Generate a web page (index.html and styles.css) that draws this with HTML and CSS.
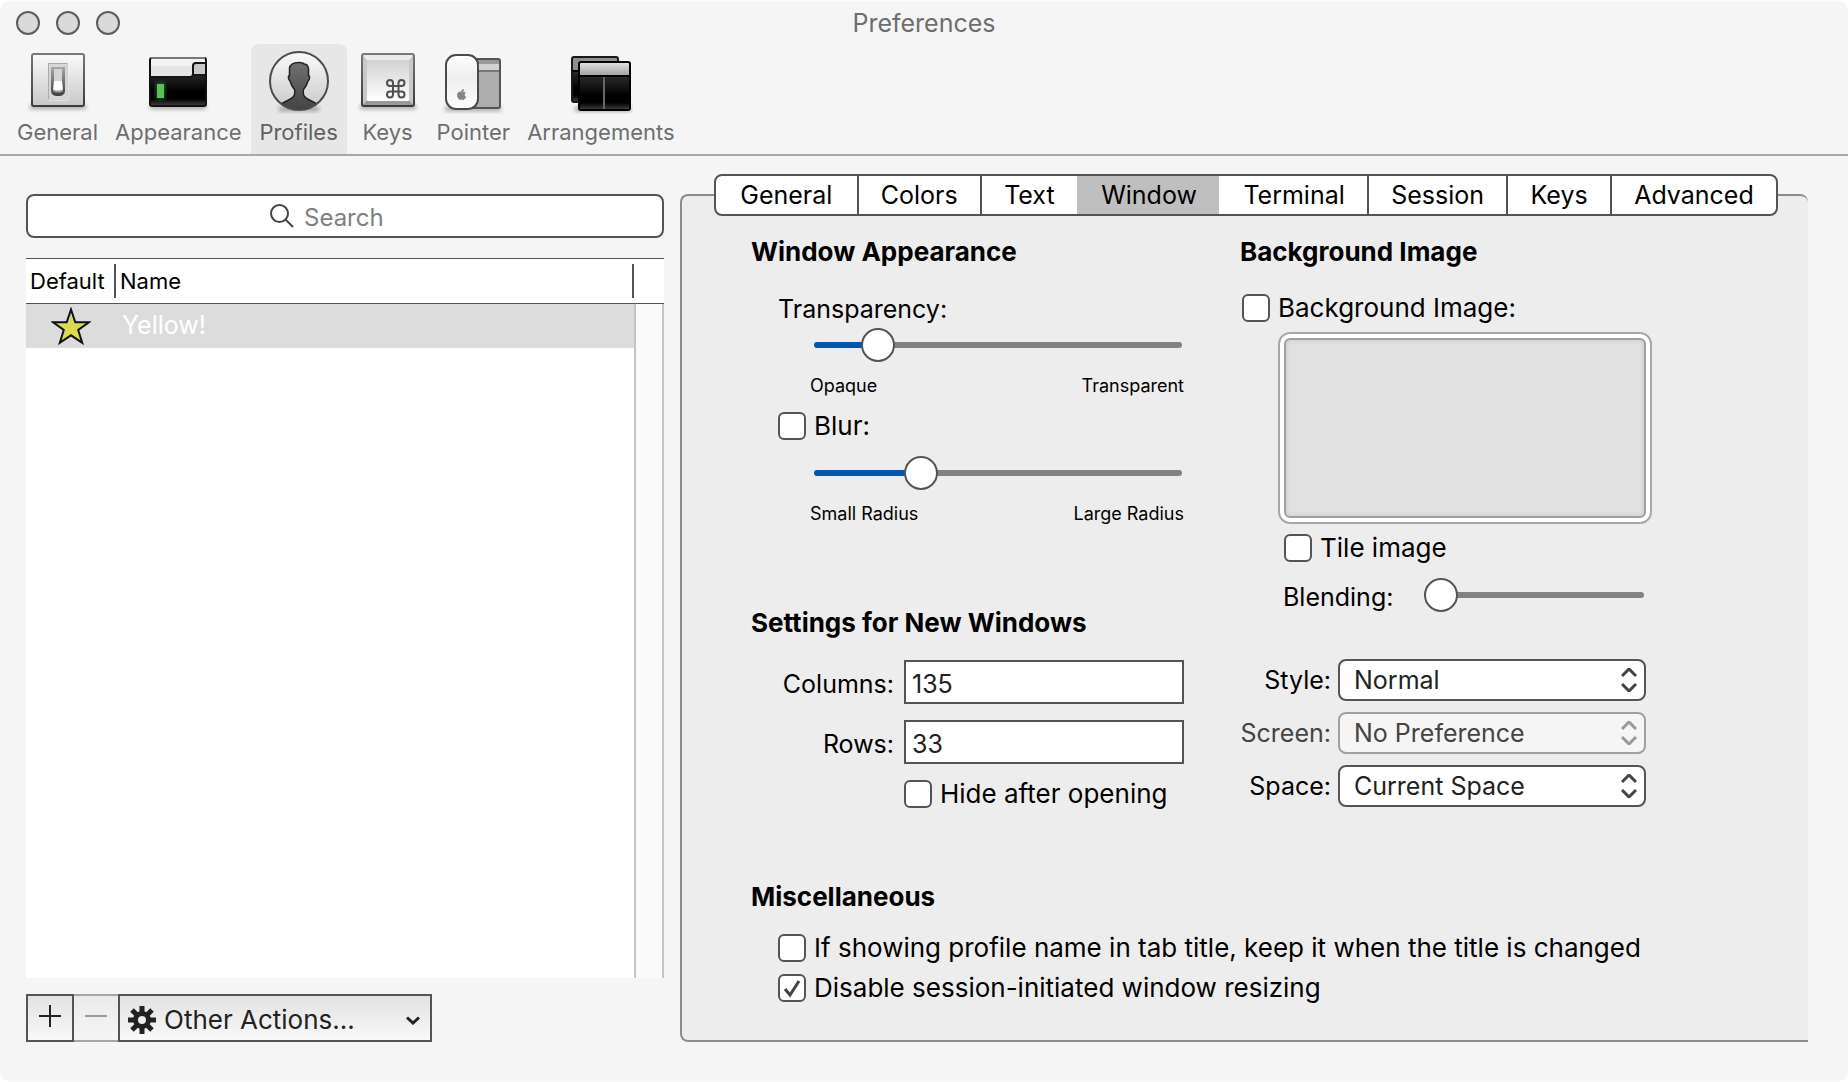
FILE: index.html
```html
<!DOCTYPE html>
<html lang="en">
<head>
<meta charset="utf-8">
<title>Preferences</title>
<link rel="stylesheet" href="styles.css">
</head>
<body>
<div class="window">
  <header class="titlebar">
    <div class="lights">
      <button class="light" aria-label="Close"></button>
      <button class="light" aria-label="Minimize"></button>
      <button class="light" aria-label="Zoom"></button>
    </div>
    <h1 class="title">Preferences</h1>
  </header>

  <nav class="toolbar" aria-label="Preference sections">
    <button class="tool">
      <svg class="tool-icon" viewBox="0 0 64 64" aria-hidden="true">
        <defs>
          <linearGradient id="plate" x1="0" y1="0" x2="0" y2="1"><stop offset="0" stop-color="#fafafa"/><stop offset="1" stop-color="#c8c8c8"/></linearGradient>
          <linearGradient id="rim" x1="0" y1="0" x2="0" y2="1"><stop offset="0" stop-color="#777"/><stop offset="1" stop-color="#3c3c3c"/></linearGradient>
          <linearGradient id="slot" x1="0" y1="0" x2="0" y2="1"><stop offset="0" stop-color="#a8a8a8"/><stop offset="1" stop-color="#3e3e3e"/></linearGradient>
          <linearGradient id="black" x1="0" y1="0" x2="0" y2="1"><stop offset="0" stop-color="#4a4a4a"/><stop offset=".7" stop-color="#000"/><stop offset=".85" stop-color="#000"/><stop offset="1" stop-color="#444"/></linearGradient>
          <linearGradient id="bar" x1="0" y1="0" x2="0" y2="1"><stop offset="0" stop-color="#e4e4e4"/><stop offset="1" stop-color="#a0a0a0"/></linearGradient>
          <linearGradient id="person" x1="0" y1="0" x2="0" y2="1"><stop offset="0" stop-color="#707070"/><stop offset="1" stop-color="#404040"/></linearGradient>
          <filter id="soft" x="-20%" y="-100%" width="140%" height="300%"><feGaussianBlur stdDeviation="2"/></filter>
        </defs>
        <rect x="4" y="55" width="56" height="4" fill="#000" opacity=".35" filter="url(#soft)"/>
        <rect x="6" y="4" width="52" height="52" rx="2" fill="url(#plate)" stroke="url(#rim)" stroke-width="2"/>
        <rect x="22.500" y="13.500" width="19" height="36" fill="#d6d6d6" stroke="#aaa"/>
        <path d="M42 13v37H22" fill="none" stroke="#f4f4f4"/>
        <path d="M25 17h14v23c0 4-2 6-7 6s-7-2-7-6z" fill="url(#slot)"/>
        <rect x="28" y="19" width="8" height="13" fill="#d4d4d4"/>
        <path d="M28 31h8l1 9c-1 1-3 2-5 2s-4-1-5-2z" fill="#fff"/>
        <path d="M27 39c2 2 8 2 10 0v2c-2 2-8 2-10 0z" fill="#999"/>
      </svg>
      <span>General</span>
    </button>
    <button class="tool">
      <svg class="tool-icon" viewBox="0 0 64 64" aria-hidden="true">
        <rect x="4" y="55" width="56" height="4" fill="#000" opacity=".35" filter="url(#soft)"/>
        <rect x="4" y="8" width="56" height="48" rx="2" fill="url(#black)"/>
        <path d="M4 8h56v18H46v1H4z" fill="#e4e6e4"/>
        <path d="M4 8h56v8H4z" fill="#f3f3f3"/>
        <path d="M47 25V15q0-2 2-2h11v12z" fill="#c9c9c9"/>
        <path d="M4 27h40q3 0 3-3v-8q0-3 3-3h10M47 25h13" fill="none" stroke="#151515" stroke-width="2"/>
        <rect x="4" y="8" width="56" height="48" rx="2" fill="none" stroke="#111" stroke-width="2"/>
        <path d="M5 8h54" stroke="#777" stroke-width="2"/>
        <rect x="10" y="33" width="9" height="16" fill="#3f9a44" opacity=".6" filter="url(#soft)"/>
        <rect x="11" y="34" width="7" height="14" fill="#55c158"/>
      </svg>
      <span>Appearance</span>
    </button>
    <button class="tool tool-active" aria-current="page">
      <svg class="tool-icon" viewBox="0 0 64 64" aria-hidden="true">
        <clipPath id="disc"><circle cx="32" cy="31" r="29"/></clipPath>
        <rect x="12" y="57" width="40" height="4" fill="#000" opacity=".35" filter="url(#soft)"/>
        <circle cx="32" cy="31" r="29" fill="url(#plate)"/>
        <path clip-path="url(#disc)" d="M32 12.500c-5 0-9 1-9.500 6v7c-1.500 0-1.500 4 .5 5.500 1 4 2.500 6 4.500 8.500 1 6-1 8-5 10L10 56l6 8h32l6-8-12.500-6.500c-4-2-6-4-5-10 2-2.500 3.500-4.500 4.500-8.500 2-1.500 2-5.500.5-5.500v-7c-.5-3-2-4.500-4.500-4.500-1-1.500-3-1.500-5-1.500z" fill="url(#person)" stroke="#222" stroke-width="1.500"/>
        <circle cx="32" cy="31" r="29" fill="none" stroke="#4c4c4c" stroke-width="2"/>
      </svg>
      <span>Profiles</span>
    </button>
    <button class="tool">
      <svg class="tool-icon" viewBox="0 0 64 64" aria-hidden="true">
        <rect x="4" y="55" width="56" height="4" fill="#000" opacity=".35" filter="url(#soft)"/>
        <rect x="6" y="4" width="52" height="52" rx="2" fill="#c9c9c9"/>
        <path d="M6 4h52l-5 6H11z" fill="#ececec"/>
        <path d="M6 56h52l-5-6H11z" fill="#9a9a9a"/>
        <rect x="11" y="10" width="42" height="41" rx="1" fill="url(#key)"/>
        <linearGradient id="key" x1="0" y1="0" x2="0" y2="1"><stop offset="0" stop-color="#d2d2d2"/><stop offset="1" stop-color="#fff"/></linearGradient>
        <rect x="6" y="4" width="52" height="52" rx="2" fill="none" stroke="url(#rim)" stroke-width="2"/>
        <path d="M37 36v8.500a3 3 0 1 1-3-3h11.500a3 3 0 1 1-3 3V33a3 3 0 1 1 3 3H34a3 3 0 1 1 3-3z" fill="none" stroke="#505050" stroke-width="2"/>
      </svg>
      <span>Keys</span>
    </button>
    <button class="tool">
      <svg class="tool-icon" viewBox="0 0 64 64" aria-hidden="true">
        <rect x="4" y="57" width="56" height="4" fill="#000" opacity=".35" filter="url(#soft)"/>
        <rect x="24" y="9" width="35" height="49" rx="2" fill="#adadad"/>
        <path d="M25 10h33v4H25z" fill="#999"/><path d="M25 14h33v6H25z" fill="#d2d2d2"/>
        <path d="M25 21h33" stroke="#777" stroke-width="2"/>
        <rect x="24" y="9" width="35" height="49" rx="2" fill="none" stroke="#555" stroke-width="2"/>
        <rect x="5" y="5" width="32" height="54" rx="10" fill="url(#mouse)" stroke="#4a4a4a" stroke-width="2"/>
        <linearGradient id="mouse" x1="0" y1="0" x2="0" y2="1"><stop offset="0" stop-color="#fff"/><stop offset=".4" stop-color="#eee"/><stop offset="1" stop-color="#fdfdfd"/></linearGradient>
        <path transform="translate(15.500 39.500) scale(.42)" fill="#858585" d="M12.152 6.896c-.948 0-2.415-1.078-3.960-1.040-2.040.027-3.910 1.183-4.961 3.014-2.117 3.675-.546 9.103 1.519 12.090 1.013 1.454 2.208 3.090 3.792 3.039 1.520-.065 2.090-.987 3.935-.987 1.831 0 2.350.987 3.960.948 1.637-.026 2.676-1.480 3.676-2.948 1.156-1.688 1.636-3.325 1.662-3.415-.039-.013-3.182-1.221-3.220-4.857-.026-3.040 2.480-4.494 2.597-4.559-1.429-2.090-3.623-2.324-4.390-2.376-2-.156-3.675 1.090-4.610 1.090zM15.530 3.830c.843-1.012 1.400-2.427 1.245-3.830-1.207.052-2.662.805-3.532 1.818-.780.896-1.454 2.338-1.273 3.714 1.338.104 2.715-.688 3.559-1.701" stroke="#858585" stroke-width="2"/>
      </svg>
      <span>Pointer</span>
    </button>
    <button class="tool">
      <svg class="tool-icon" viewBox="0 0 64 64" aria-hidden="true">
        <rect x="6" y="57" width="56" height="4" fill="#000" opacity=".4" filter="url(#soft)"/>
        <rect x="3" y="7" width="46" height="45" rx="2" fill="url(#black)"/>
        <path d="M3 8h45v13H3z" fill="#8e8e8e"/>
        <path d="M3 21h10" stroke="#000" stroke-width="2"/>
        <rect x="3" y="7" width="46" height="45" rx="2" fill="none" stroke="#181818" stroke-width="2"/>
        <rect x="10" y="12" width="51" height="48" rx="2" fill="url(#black)"/>
        <path d="M10 12h51v14H10z" fill="url(#bar)"/>
        <path d="M10 26h51" stroke="#000" stroke-width="2"/>
        <path d="M35 27v32" stroke="#666" stroke-width="2"/>
        <rect x="10" y="12" width="51" height="48" rx="2" fill="none" stroke="#000" stroke-width="2"/>
      </svg>
      <span>Arrangements</span>
    </button>
  </nav>

  <main class="content">
    <section class="sidebar" aria-label="Profiles">
      <label class="search">
        <svg class="search-icon" viewBox="0 0 24 24" aria-hidden="true"><circle cx="9.500" cy="9.500" r="8.500"/><path d="M15.500 15.500l7.500 7.500"/></svg>
        <input class="search-input" type="search" placeholder="Search" aria-label="Search profiles">
      </label>

      <div class="list">
        <table class="profiles">
          <colgroup><col class="col-default"><col><col class="col-end"></colgroup>
          <thead>
            <tr><th scope="col"><span>Default</span></th><th scope="col"><span>Name</span></th><td></td></tr>
          </thead>
          <tbody>
            <tr>
              <td class="star-cell"><svg class="star" viewBox="0 0 40 38" role="img" aria-label="Default profile"><path d="M20 2.500l4.300 12.700h13.700L27.200 23l4 12.800L20 28.300 8.800 35.800l4-12.800L2 15.200h13.700z"/></svg></td>
              <td>Yellow!</td>
              <td></td>
            </tr>
          </tbody>
        </table>
      </div>

      <div class="actions">
        <button class="action" aria-label="Add profile"><svg class="sign" viewBox="0 0 22 22" aria-hidden="true"><path d="M11 0v22M0 11h22"/></svg></button>
        <button class="action action-off" aria-label="Remove profile" disabled><svg class="sign" viewBox="0 0 22 22" aria-hidden="true"><path d="M0 11h22"/></svg></button>
        <button class="action action-menu" aria-haspopup="menu">
          <svg class="gear" viewBox="-14 -14 28 28" aria-hidden="true">
            <g fill="none" stroke="#222" stroke-width="5"><path d="M0-14V-7M0 14V7M-14 0H-7M14 0H7M-10-10L-5-5M10-10L5-5M-10 10L-5 5M10 10L5 5"/><circle r="6.500"/></g>
          </svg>
          <span class="action-text">Other Actions...</span>
          <svg class="down" viewBox="0 0 14 9" aria-hidden="true"><path d="M1 1.500l6 5.500 6-5.500"/></svg>
        </button>
      </div>
    </section>

    <section class="panel" aria-label="Profile settings">
      <div class="tabs" role="tablist">
        <button class="tab" role="tab">General</button>
        <button class="tab" role="tab">Colors</button>
        <button class="tab" role="tab">Text</button>
        <button class="tab tab-active" role="tab" aria-selected="true">Window</button>
        <button class="tab" role="tab">Terminal</button>
        <button class="tab" role="tab">Session</button>
        <button class="tab" role="tab">Keys</button>
        <button class="tab" role="tab">Advanced</button>
      </div>

      <div class="groups">
        <div class="column">
          <h2 class="heading">Window Appearance</h2>
          <div class="appearance">
            <label class="text-label" for="transparency">Transparency:</label>
            <div class="range-group">
              <input class="slider" id="transparency" type="range" value="14" style="--fill: 14%">
              <div class="ends"><span>Opaque</span><span>Transparent</span></div>
            </div>
            <label class="check"><input type="checkbox"> Blur:</label>
            <div class="range-group range-blur">
              <input class="slider" type="range" value="27" style="--fill: 27%" aria-label="Blur radius">
              <div class="ends"><span>Small Radius</span><span>Large Radius</span></div>
            </div>
          </div>

          <h2 class="heading heading-new">Settings for New Windows</h2>
          <div class="sizes">
            <label for="columns">Columns:</label>
            <input class="field" id="columns" type="text" value="135">
            <label for="rows">Rows:</label>
            <input class="field" id="rows" type="text" value="33">
            <label class="check check-hide"><input type="checkbox"> Hide after opening</label>
          </div>
        </div>

        <div class="column">
          <h2 class="heading">Background Image</h2>
          <label class="check check-image"><input type="checkbox"> Background Image:</label>
          <div class="image-block">
            <div class="well" role="img" aria-label="No background image"></div>
            <label class="check check-tile"><input type="checkbox"> Tile image</label>
            <div class="blending">
              <label for="blending">Blending:</label>
              <input class="slider" id="blending" type="range" value="0" style="--fill: 0%">
            </div>
          </div>
          <div class="options">
            <label for="style">Style:</label>
            <span class="popup">
              <select id="style"><option>Normal</option></select>
              <svg class="updown" viewBox="0 0 16 24" aria-hidden="true"><path d="M1 8l7-7 7 7M1 16l7 7 7-7"/></svg>
            </span>
            <label class="label-off" for="screen">Screen:</label>
            <span class="popup popup-off">
              <select id="screen" disabled><option>No Preference</option></select>
              <svg class="updown" viewBox="0 0 16 24" aria-hidden="true"><path d="M1 8l7-7 7 7M1 16l7 7 7-7"/></svg>
            </span>
            <label for="space">Space:</label>
            <span class="popup">
              <select id="space"><option>Current Space</option></select>
              <svg class="updown" viewBox="0 0 16 24" aria-hidden="true"><path d="M1 8l7-7 7 7M1 16l7 7 7-7"/></svg>
            </span>
          </div>
        </div>
      </div>

      <div class="misc">
        <h2 class="heading">Miscellaneous</h2>
        <div class="misc-list">
          <label class="check"><input type="checkbox"> If showing profile name in tab title, keep it when the title is changed</label>
          <label class="check"><input type="checkbox" checked> Disable session-initiated window resizing</label>
        </div>
      </div>
    </section>
  </main>
</div>
</body>
</html>
```
FILE: styles.css
```css
:root {
  --line: #545454;
  --large: 26px;
  --text: 25px;
  --small: 18px;
}

*, ::before, ::after { box-sizing: border-box; }

body {
  margin: 0;
  background: #fff;
  color: #000;
  font: 400 var(--text)/30px Inter, "Liberation Sans", sans-serif;
}

button, input, select {
  margin: 0;
  font: inherit;
  color: inherit;
}

.window {
  display: flex;
  flex-direction: column;
  min-height: 100vh;
  background: #f5f5f5;
  border-top: 1px solid #fcfcfc;
  border-bottom: 1px solid #fcfcfc;
  border-radius: 10px;
}

/* Title bar and toolbar */
.titlebar {
  display: grid;
  grid-template-columns: 1fr auto 1fr;
  align-items: center;
  height: 43px;
  padding: 0 16px;
}

.lights { display: flex; gap: 16px; }

.light {
  width: 24px;
  height: 24px;
  padding: 0;
  border: 2px solid #5c5c5c;
  border-radius: 50%;
  background: #dadada;
}

.title {
  margin: 0;
  color: #6e6e6e;
  font-size: var(--text);
  font-weight: 400;
}

.toolbar {
  display: flex;
  gap: 1px;
  padding: 0 9px;
  border-bottom: 2px solid #a8a8a8;
}

.tool {
  display: flex;
  flex-direction: column;
  align-items: center;
  min-width: 78px;
  height: 110px;
  padding: 6px 8px 0;
  border: 0;
  border-radius: 8px 8px 0 0;
  background: none;
  color: #6e6e6e;
  font-size: 22px;
  line-height: 30px;
}

.tool-active { min-width: 96px; background: #e7e7e7; color: #606060; }

.tool-icon {
  flex: none;
  width: 64px;
  height: 64px;
  margin-bottom: 3px;
}

/* Body */
.content {
  flex: 1;
  display: grid;
  grid-template-columns: minmax(0, 638fr) minmax(0, 1128fr);
  gap: 16px;
  padding: 38px 40px 39px 26px;
}

.sidebar { display: flex; flex-direction: column; }

.search {
  display: flex;
  align-items: center;
  justify-content: center;
  gap: 10px;
  height: 44px;
  border: 2px solid var(--line);
  border-radius: 8px;
  background: #fff;
}

.search-icon {
  width: 24px;
  height: 24px;
  fill: none;
  stroke: #444;
  stroke-width: 2;
}

.search-input {
  width: 116px;
  padding: 3px 0 0;
  border: 0;
  outline: 0;
  background: none;
  font-size: 24px;
}

.search-input::placeholder { color: #808080; }

.list {
  position: relative;
  flex: 1;
  margin: 20px 0 16px;
  background: #fff;
}

/* Scroll track under the header */
.list::after {
  content: "";
  position: absolute;
  top: 46px;
  right: 0;
  bottom: 0;
  width: 30px;
  border: solid #c4c4c4;
  border-width: 0 2px;
  background: #fafafa;
}

.profiles {
  width: 100%;
  border-collapse: separate;
  border-spacing: 0;
  table-layout: fixed;
}

.col-default { width: 90px; }
.col-end { width: 30px; }

.profiles th,
.profiles td { padding: 0; text-align: left; }

.profiles thead th,
.profiles thead td {
  height: 46px;
  border: solid var(--line);
  border-width: 1px 0;
  font-size: 22px;
  font-weight: 400;
}

.profiles th span {
  display: block;
  padding-left: 4px;
  border-right: 2px solid var(--line);
  line-height: 34px;
}

.profiles tbody td {
  height: 44px;
  padding: 0 0 2px 6px;
  background: #dcdcdc;
  color: #fff;
}

.profiles .star-cell { padding: 0; text-align: center; }

.star {
  display: block;
  width: 40px;
  height: 38px;
  margin: 0 auto;
  fill: #dbdc4c;
  stroke: #111;
  stroke-width: 2;
}

.actions { display: flex; }

.action {
  display: flex;
  align-items: center;
  justify-content: center;
  width: 48px;
  height: 48px;
  padding: 0 0 4px;
  border: 2px solid var(--line);
  background: linear-gradient(#e2e2e2, #f8f8f8);
  color: #222;
}

.action-off {
  width: 44px;
  border-color: #a6a6a6;
  border-width: 2px 0;
  background: linear-gradient(#ebebeb, #f5f5f5);
}

.action-menu {
  gap: 8px;
  width: 314px;
  padding: 4px 10px 0 8px;
  font-size: var(--large);
}

.action-text { flex: 1; text-align: left; }

.sign {
  width: 22px;
  height: 22px;
  fill: none;
  stroke: #222;
  stroke-width: 2;
}

.action-off .sign { stroke: #999; }

.gear { width: 28px; height: 28px; }

.down {
  width: 14px;
  height: 9px;
  fill: none;
  stroke: #222;
  stroke-width: 3;
}

/* Settings panel */
.panel {
  padding: 0 30px 0 32px;
  border: 2px solid #8c8c8c;
  border-right: 0;
  border-radius: 8px 8px 0 8px;
  background: #ededed;
}

.tabs {
  display: flex;
  height: 42px;
  margin-top: -22px;
  border: 2px solid var(--line);
  border-radius: 8px;
  background: #fff;
  overflow: hidden;
}

.tab {
  flex: 1 1 auto;
  padding: 0 16px;
  border: 0;
  border-left: 2px solid var(--line);
  background: none;
}

.tab:first-child { padding: 0 18px; border-left: 0; }
.tab-active { background: #bfbfbf; }
.tab-active, .tab-active + .tab { border-left-color: transparent; }

.groups {
  display: grid;
  grid-template-columns: minmax(0, 489fr) minmax(0, 538fr);
  padding: 21px 0 0 37px;
}

.heading {
  margin: 0;
  font-size: var(--large);
  font-weight: 700;
}

.heading-new { margin-top: 82px; }

.appearance {
  display: flex;
  flex-direction: column;
  padding: 27px 58px 0 27px;
}

.range-group { padding: 4px 0 14px 36px; }
.range-blur { padding: 16px 0 0 36px; }

.slider {
  display: block;
  width: 100%;
  height: 34px;
  appearance: none;
  background: none;
}

.slider::-webkit-slider-runnable-track {
  height: 6px;
  border-radius: 3px;
  background: linear-gradient(90deg, #0057b0 var(--fill), #828282 var(--fill));
}

.slider::-webkit-slider-thumb {
  width: 34px;
  height: 34px;
  margin-top: -14px;
  appearance: none;
  border: 2px solid var(--line);
  border-radius: 50%;
  background: #fff;
}

.ends {
  display: flex;
  justify-content: space-between;
  margin: 12px -2px 0 -4px;
  font-size: var(--small);
  line-height: 24px;
}

.check {
  display: flex;
  align-items: center;
  gap: 8px;
  height: 28px;
  font-size: var(--large);
}

.check input {
  flex: none;
  width: 28px;
  height: 28px;
  appearance: none;
  border: 2px solid var(--line);
  border-radius: 6px;
  background: #fff;
}

.check input:checked {
  background: #fff url("data:image/svg+xml,%3Csvg xmlns='http://www.w3.org/2000/svg' viewBox='0 0 24 24'%3E%3Cpath d='M5 13l5 6L19 5' fill='none' stroke='%23444' stroke-width='3'/%3E%3C/svg%3E") center / 24px no-repeat;
}

.sizes {
  display: grid;
  grid-template-columns: 143px 1fr;
  gap: 16px 10px;
  align-items: center;
  padding: 22px 56px 0 0;
}

.sizes > label:not(.check) { padding-top: 4px; text-align: right; }

.field {
  width: 100%;
  height: 44px;
  padding: 4px 6px 0;
  border: 2px solid var(--line);
  border-radius: 0;
  background: #fff;
  color: #222;
}

.check-hide { grid-column: 2; }
.check-image { margin: 27px 0 10px 2px; }

.image-block { padding-left: 38px; }

.well {
  max-width: 374px;
  height: 192px;
  padding: 4px;
  border: 2px solid #a8a8a8;
  border-radius: 12px;
  background: #fff;
}

.well::before {
  content: "";
  display: block;
  height: 100%;
  border: 2px solid #a0a0a0;
  border-radius: 6px;
  background: #e1e1e1;
  box-shadow: inset 0 0 4px #c4c4c4;
}

.check-tile { margin: 10px 0 16px 6px; }

.blending {
  display: grid;
  grid-template-columns: 1fr 220px;
  align-items: center;
  max-width: 366px;
  padding-left: 5px;
}

.blending label { padding-top: 4px; }

.options {
  display: grid;
  grid-template-columns: 91px minmax(0, 308px);
  gap: 11px 7px;
  align-items: center;
  margin-top: 47px;
}

.options label { text-align: right; }
.options .label-off { color: #444; }

.popup { display: grid; align-items: center; }
.popup > * { grid-area: 1 / 1; }

.popup select {
  width: 100%;
  height: 42px;
  padding: 0 40px 0 14px;
  appearance: none;
  border: 2px solid var(--line);
  border-radius: 8px;
  background: #fff;
  color: #222;
  opacity: 1;
}

.updown {
  justify-self: end;
  width: 16px;
  height: 24px;
  margin-right: 9px;
  fill: none;
  stroke: #444;
  stroke-width: 3;
  pointer-events: none;
}

.popup-off select {
  border-color: #a0a0a0;
  background: #f5f5f5;
  color: #444;
}

.popup-off .updown { stroke: #999; }

.misc { padding: 74px 0 38px 37px; }

.misc-list {
  display: flex;
  flex-direction: column;
  gap: 12px;
  padding: 22px 0 0 27px;
}
```
